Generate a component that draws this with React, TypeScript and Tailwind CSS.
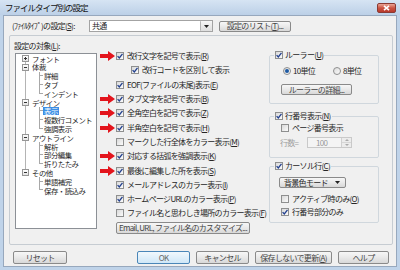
import React from "react";

const txt = "text-[8px] leading-none tracking-[-0.7px] text-[#262626] whitespace-nowrap";
const treeTxt = "text-[7.4px] leading-[7.4px] tracking-[-0.5px] text-[#262626] whitespace-nowrap";

type Kids = { children?: React.ReactNode };

function K({ k }: { k: string }) {
  return (
    <>
      (<span className="underline underline-offset-[1px]">{k}</span>)
    </>
  );
}

function Check({ on = true }: { on?: boolean }) {
  return (
    <span className="flex h-[8px] w-[8px] shrink-0 items-center justify-center border border-[#8e8f8f] bg-linear-to-br from-[#d9d9d9] to-[#fbfbfb]">
      {on && (
        <svg width="6" height="6" viewBox="0 0 6 6">
          <path d="M0.6 3.1 L2.3 4.9 L5.5 0.8" fill="none" stroke="#22408f" strokeWidth="1.3" />
        </svg>
      )}
    </span>
  );
}

function Radio({ on = false }: { on?: boolean }) {
  return (
    <span className="flex h-[8px] w-[8px] shrink-0 items-center justify-center rounded-full border border-[#8e8f8f] bg-linear-to-br from-[#dcdcdc] to-[#fbfbfb]">
      {on && <span className="h-[4px] w-[4px] rounded-full bg-[#1d5aa3]" />}
    </span>
  );
}

function Arrow() {
  return (
    <svg width="15" height="10" viewBox="0 0 15 10">
      <path d="M0 3 H8 V0 L15 5 L8 10 V7 H0 Z" fill="#e3141c" />
    </svg>
  );
}

function Btn({ className = "", ok = false, children }: Kids & { className?: string; ok?: boolean }) {
  return (
    <div
      className={`flex shrink-0 items-center justify-center rounded-[2px] border ${
        ok
          ? "border-[#4a86b8] bg-linear-to-b from-[#f1f8fd] to-[#cfe7f7] text-[#666]"
          : "border-[#8a8a8a] bg-linear-to-b from-[#f7f7f7] via-[#e9e9e9] to-[#d8d8d8] text-[#444]"
      } text-[8px] leading-none tracking-[-0.7px] whitespace-nowrap ${className}`}
    >
      {children}
    </div>
  );
}

function Row({ arrow = false, on = true, indent = false, children }: Kids & { arrow?: boolean; on?: boolean; indent?: boolean }) {
  return (
    <div className="flex h-[14.3px] items-center">
      <span className="flex w-[16px] shrink-0 items-center">{arrow && <Arrow />}</span>
      {indent && <span className="w-[15px] shrink-0" />}
      <Check on={on} />
      <span className={`ml-[3px] ${txt}`}>{children}</span>
    </div>
  );
}

type Node = { label: string; kids?: string[]; open?: boolean };

const tree: Node[] = [
  { label: "フォント", kids: [], open: false },
  { label: "体裁", kids: ["詳細", "タブ", "インデント"], open: true },
  { label: "デザイン", kids: ["表示", "複数行コメント", "強調表示"], open: true },
  { label: "アウトライン", kids: ["解析", "部分編集", "折りたたみ"], open: true },
  { label: "その他", kids: ["単語補完", "保存・読込み"], open: true },
];

const line = "bg-[#b4b4b4]";

function RootRow({ node, first, last }: { node: Node; first: boolean; last: boolean }) {
  return (
    <div className="flex h-[8.8px] items-stretch">
      <span className="w-[6px] shrink-0" />
      <span className="flex w-[7px] shrink-0 flex-col items-center">
        <span className={`w-px flex-1 ${first ? "" : line}`} />
        <span className="flex h-[7px] w-[7px] items-center justify-center border border-[#969696] bg-linear-to-b from-white to-[#e4e4e4]">
          <span className="relative flex h-[3px] w-[3px] items-center justify-center">
            <span className="h-px w-[3px] bg-[#333]" />
            {!node.open && <span className="absolute h-[3px] w-px bg-[#333]" />}
          </span>
        </span>
        <span className={`w-px flex-1 ${last ? "" : line}`} />
      </span>
      <span className={`ml-[3px] self-center ${treeTxt}`}>{node.label}</span>
    </div>
  );
}

function ChildRow({ label, rootCont, last }: { label: string; rootCont: boolean; last: boolean }) {
  const sel = label === "表示";
  return (
    <div className="flex h-[8.8px] items-stretch">
      <span className="w-[9px] shrink-0" />
      <span className={`w-px shrink-0 ${rootCont ? line : ""}`} />
      <span className="w-[13px] shrink-0" />
      <span className="flex w-[4px] shrink-0 flex-col">
        <span className="h-1/2 border-b border-l border-[#a8a8a8]" />
        <span className={`h-1/2 ${last ? "" : "border-l border-[#a8a8a8]"}`} />
      </span>
      <span className={`self-center px-[1px] ${treeTxt} ${sel ? "bg-[#3a8ee6] !text-white" : ""}`}>{label}</span>
    </div>
  );
}

function Legend({ children }: Kids) {
  return (
    <legend className="ml-[4px] px-[1px]">
      <div className="flex h-[10px] items-center">
        <Check />
        <span className={`ml-[2px] ${txt}`}>{children}</span>
      </div>
    </legend>
  );
}

export default function App() {
  return (
    <div className="flex h-[270px] w-[400px] flex-col overflow-hidden bg-[#bfd3e9] font-['Noto_Sans_CJK_JP','Noto_Sans',sans-serif]">
      {/* title bar */}
      <div className="flex h-[15px] shrink-0 items-start justify-between bg-linear-to-b from-[#d6e4f3] to-[#bcd0e7] pl-[5px] pr-[4px]">
        <span className="mt-[3px] text-[8.5px] leading-none tracking-[-1px] whitespace-nowrap text-[#111]">
          ファイルタイプ別の設定
        </span>
        <span className="mt-[3px] flex h-[10px] w-[19px] items-center justify-center rounded-[2px] border border-[#8a3a33] bg-linear-to-b from-[#e9a496] via-[#cb5342] to-[#b8392b]">
          <svg width="7" height="6" viewBox="0 0 7 6">
            <path d="M1 0.8 L6 5.2 M6 0.8 L1 5.2" stroke="white" strokeWidth="1.6" />
          </svg>
        </span>
      </div>

      {/* dialog body */}
      <div className="mx-[3px] mb-[3px] flex flex-1 flex-col border border-[#97a8bd] bg-[#f0f0f0]">
        {/* file type row */}
        <div className="mt-[4px] flex h-[12px] items-center pl-[8px]">
          <span className={`w-[77px] shrink-0 ${txt}`}>
            (ﾌｧｲﾙﾀｲﾌﾟ)の設定<K k="S" />:
          </span>
          <div className="flex h-[12px] w-[124px] items-center border border-[#a3a3a3] bg-white">
            <span className={`ml-[2px] flex-1 ${txt}`}>共通</span>
            <span className="flex h-full w-[12px] items-center justify-center rounded-[1px] border-l border-[#b5b5b5] bg-linear-to-b from-[#f6f6f6] to-[#dedede]">
              <svg width="5" height="3" viewBox="0 0 5 3">
                <path d="M0 0 H5 L2.5 3 Z" fill="#222" />
              </svg>
            </span>
          </div>
          <Btn className="ml-[6px] h-[11px] w-[72px]">
            設定のリスト<K k="T" />...
          </Btn>
        </div>

        {/* main group */}
        <div className="mt-[3px] ml-[5px] flex h-[210px] w-[384px] items-start rounded-[2px] border border-[#c6ccd2]">
          {/* target tree */}
          <div className="flex w-[90px] shrink-0 flex-col pl-[4px] pt-[5px]">
            <span className={`flex h-[10px] items-center ${txt}`}>
              設定の対象<K k="L" />:
            </span>
            <div className="mt-[2px] ml-[1px] flex h-[176px] w-[82px] flex-col border border-[#8c9096] bg-white">
              {tree.map((n, i) => {
                const lastRoot = i === tree.length - 1;
                return (
                  <React.Fragment key={n.label}>
                    <RootRow node={n} first={i === 0} last={lastRoot} />
                    {n.kids?.map((c, j) => (
                      <ChildRow key={c} label={c} rootCont={!lastRoot} last={j === n.kids!.length - 1} />
                    ))}
                  </React.Fragment>
                );
              })}
            </div>
          </div>

          {/* display options */}
          <div className="flex w-[169px] shrink-0 flex-col pt-[13px]">
            <Row arrow>
              改行文字を記号で表示<K k="R" />
            </Row>
            <Row indent>改行コードを区別して表示</Row>
            <Row>
              EOF(ファイルの末尾)表示<K k="E" />
            </Row>
            <Row arrow>
              タブ文字を記号で表示<K k="B" />
            </Row>
            <Row arrow>
              全角空白を記号で表示<K k="Z" />
            </Row>
            <Row arrow>
              半角空白を記号で表示<K k="H" />
            </Row>
            <Row on={false}>
              マークした行全体をカラー表示<K k="M" />
            </Row>
            <Row arrow>
              対応する括弧を強調表示<K k="K" />
            </Row>
            <Row arrow>
              最後に編集した所を表示<K k="S" />
            </Row>
            <Row>
              メールアドレスのカラー表示<K k="I" />
            </Row>
            <Row>
              ホームページURLのカラー表示<K k="P" />
            </Row>
            <Row on={false}>
              ファイル名と思わしき場所のカラー表示<K k="F" />
            </Row>
            <Btn className="mt-[1px] ml-[16px] h-[12px] w-[134px]">Email, URL, ファイル名のカスタマイズ...</Btn>
          </div>

          {/* right column */}
          <div className="flex w-[110px] shrink-0 flex-col pt-[14px]">
            <fieldset className="rounded-[2px] border border-[#d0d7dd] pb-[8px]">
              <Legend>
                ルーラー<K k="U" />
              </Legend>
              <div className="mt-[6px] flex h-[10px] items-center pl-[13px]">
                <span className="flex w-[50px] items-center">
                  <Radio on />
                  <span className={`ml-[2px] ${txt}`}>10単位</span>
                </span>
                <Radio />
                <span className={`ml-[2px] ${txt}`}>8単位</span>
              </div>
              <Btn className="mt-[8px] ml-[11px] h-[11px] w-[71px]">ルーラーの詳細...</Btn>
            </fieldset>

            <fieldset className="mt-[7px] rounded-[2px] border border-[#d0d7dd] pb-[9px]">
              <Legend>
                行番号表示<K k="N" />
              </Legend>
              <div className="mt-[2px] flex h-[10px] items-center pl-[11px]">
                <Check on={false} />
                <span className={`ml-[3px] ${txt}`}>ページ番号表示</span>
              </div>
              <div className="mt-[4px] flex h-[11px] items-center pl-[10px]">
                <span className={`w-[27px] shrink-0 ${txt} !text-[#a0a0a0]`}>行数=</span>
                <div className="flex h-[11px] w-[45px] items-center border border-[#c9c9c9] bg-[#f4f4f4]">
                  <span className={`ml-[8px] flex-1 ${txt} !text-[#9a9a9a]`}>100</span>
                  <span className="flex h-full w-[10px] flex-col border-l border-[#d0d0d0]">
                    <span className="flex flex-1 items-center justify-center border-b border-[#d6d6d6] bg-[#ececec]">
                      <svg width="4" height="2" viewBox="0 0 4 2">
                        <path d="M0 2 H4 L2 0 Z" fill="#aaa" />
                      </svg>
                    </span>
                    <span className="flex flex-1 items-center justify-center bg-[#ececec]">
                      <svg width="4" height="2" viewBox="0 0 4 2">
                        <path d="M0 0 H4 L2 2 Z" fill="#aaa" />
                      </svg>
                    </span>
                  </span>
                </div>
              </div>
            </fieldset>

            <fieldset className="mt-[3px] rounded-[2px] border border-[#d0d7dd] pb-[5px]">
              <Legend>
                カーソル行<K k="C" />
              </Legend>
              <div className="mt-[6px] ml-[9px] flex h-[11px] w-[67px] items-center rounded-[2px] border border-[#8a8a8a] bg-linear-to-b from-[#f7f7f7] via-[#e9e9e9] to-[#d8d8d8]">
                <span className={`ml-[4px] flex-1 ${txt}`}>背景色モード</span>
                <svg className="mr-[5px]" width="5" height="3" viewBox="0 0 5 3">
                  <path d="M0 0 H5 L2.5 3 Z" fill="#222" />
                </svg>
              </div>
              <div className="mt-[6px] flex h-[10px] items-center pl-[11px]">
                <Check on={false} />
                <span className={`ml-[3px] ${txt}`}>
                  アクティブ時のみ<K k="O" />
                </span>
              </div>
              <div className="mt-[3px] flex h-[10px] items-center pl-[11px]">
                <Check />
                <span className={`ml-[3px] ${txt}`}>行番号部分のみ</span>
              </div>
            </fieldset>
          </div>
        </div>

        {/* bottom buttons */}
        <div className="mt-[6px] flex h-[13px] items-stretch pl-[9px] pr-[7px]">
          <Btn className="w-[54px]">リセット</Btn>
          <div className="ml-auto flex gap-[6px]">
            <Btn ok className="w-[53px]">
              OK
            </Btn>
            <Btn className="w-[53px]">キャンセル</Btn>
            <Btn className="w-[77px]">
              保存しないで更新<K k="A" />
            </Btn>
            <Btn className="w-[51px]">ヘルプ</Btn>
          </div>
        </div>
      </div>
    </div>
  );
}
